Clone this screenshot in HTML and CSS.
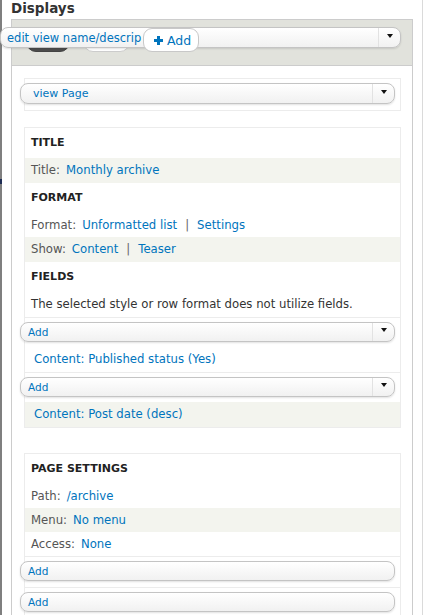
FILE: index.html
```html
<!DOCTYPE html>
<html lang="en">
<head>
    <meta charset="UTF-8">
    <meta name="viewport" content="width=device-width, initial-scale=1.0">
    <title>Displays</title>
    <link rel="stylesheet" href="styles.css">
</head>
<body>

<div class="page">
    <span class="edge-mark"></span>
    <h2 class="page-title">Displays</h2>

    <div class="displays">
        <div class="displays-top">
            <div class="tabs">
                <span class="tab tab-active"></span>
                <span class="tab"></span>
            </div>
        </div>

        <div class="displays-body">
            <div class="box box-top">
                <div class="dropbutton dropbutton-wide">
                    <span class="dropbutton-label">view Page</span>
                    <span class="dropbutton-arrow"></span>
                </div>
            </div>

            <div class="box">
                <h3 class="box-heading">Title</h3>
                <div class="row row-shaded"><span class="label">Title:</span><a href="#">Monthly archive</a></div>

                <h3 class="box-heading">Format</h3>
                <div class="row row-tight"><span class="label">Format:</span><a href="#">Unformatted list</a><span class="sep">|</span><a href="#">Settings</a></div>
                <div class="row row-shaded"><span class="label">Show:</span><a href="#">Content</a><span class="sep">|</span><a href="#">Teaser</a></div>

                <h3 class="box-heading">Fields</h3>
                <div class="row">The selected style or row format does not utilize fields.</div>

                <div class="action-row">
                    <div class="dropbutton">
                        <span class="dropbutton-label">Add</span>
                        <span class="dropbutton-arrow"></span>
                    </div>
                </div>
                <div class="row row-item"><a href="#">Content: Published status (Yes)</a></div>

                <div class="action-row">
                    <div class="dropbutton">
                        <span class="dropbutton-label">Add</span>
                        <span class="dropbutton-arrow"></span>
                    </div>
                </div>
                <div class="row row-item row-shaded"><a href="#">Content: Post date (desc)</a></div>
            </div>

            <div class="box box-settings">
                <h3 class="box-heading">Page settings</h3>
                <div class="row"><span class="label">Path:</span><a href="#">/archive</a></div>
                <div class="row row-shaded"><span class="label">Menu:</span><a href="#">No menu</a></div>
                <div class="row"><span class="label">Access:</span><a href="#">None</a></div>

                <div class="action-row">
                    <div class="dropbutton">
                        <span class="dropbutton-label">Add</span>
                    </div>
                </div>
                <div class="action-row">
                    <div class="dropbutton">
                        <span class="dropbutton-label">Add</span>
                    </div>
                </div>
            </div>
        </div>
    </div>

    <!-- floating display actions, drawn over the tabs -->
    <div class="top-actions">
        <div class="dropbutton dropbutton-top">
            <span class="edit-pill">edit view name/descrip</span>
            <span class="add-pill">
                <svg class="plus" width="9" height="9" viewBox="0 0 9 9"><rect x="3" y="0" width="3" height="9" fill="#0074bd"/><rect x="0" y="3" width="9" height="3" fill="#0074bd"/></svg>
                Add
            </span>
            <span class="spacer"></span>
            <span class="dropbutton-arrow"></span>
        </div>
    </div>
</div>

</body>
</html>
```

FILE: styles.css
```css
* {
    box-sizing: border-box;
}

body {
    margin: 0;
    font-family: "DejaVu Sans", sans-serif;
    font-size: 11.7px;
    color: #333;
    background: #fff;
}

a {
    color: #0074bd;
    text-decoration: none;
}

.page {
    position: relative;
    width: 423px;
    min-height: 615px;
    border-left: 2px solid #7f7f7f;
    border-right: 1px solid #dadada;
    padding-left: 9px;
}

.edge-mark {
    position: absolute;
    left: -2px;
    top: 179px;
    width: 2px;
    height: 5px;
    background: #1f2d55;
}

.page-title {
    margin: 0 0 3px;
    font-size: 13.5px;
    line-height: 16px;
    font-weight: bold;
    color: #333;
}

.displays {
    width: 402px;
    border: 1px solid #ccc;
    border-bottom: none;
}

.displays-top {
    background: #e1e2dc;
    border-bottom: 1px solid #ccc;
    padding: 11px 0 13px 14px;
}

.tabs {
    display: flex;
    gap: 13px;
}

.tab {
    width: 47px;
    height: 21px;
    border: 1px solid #ccc;
    border-radius: 10px;
    background: #fff;
}

.tab-active {
    width: 44px;
    background: #4d4d4d;
    border-color: #444;
}

.displays-body {
    padding: 12px 11px 0 12px;
}

.box {
    border: 1px solid #ececec;
}

.box + .box {
    margin-top: 16px;
}

.box-settings {
    border-bottom: none;
}

.box + .box-settings {
    margin-top: 25px;
}

.box-top {
    padding: 4px 0 6px;
}

.box-heading {
    margin: 0;
    padding-left: 6px;
    font-size: 11px;
    line-height: 30px;
    font-weight: bold;
    text-transform: uppercase;
    color: #222;
}

.row {
    padding-left: 6px;
    line-height: 25px;
    white-space: nowrap;
}

.row-tight,
.box-settings .row {
    line-height: 24px;
}

.row-shaded {
    background: #f3f4ee;
}

.row-item {
    padding-left: 9px;
}

.label {
    color: #555;
    margin-right: 6px;
}

.sep {
    color: #666;
    margin: 0 8px;
}

.action-row {
    border-top: 1px solid #ececec;
    padding: 4px 0 5px;
}

.box-settings .action-row {
    padding: 4px 0 6px;
}

/* dropbutton */
.dropbutton {
    display: flex;
    align-items: center;
    height: 20px;
    margin: 0 5px 0 -5px;
    border: 1px solid #c4c4c4;
    border-radius: 8px;
    background: linear-gradient(#fff, #f1f1f1);
    box-shadow: 0 1px 2px rgba(0, 0, 0, 0.12);
}

.dropbutton-label {
    flex: 1;
    padding-left: 7px;
    font-size: 10.5px;
    color: #0074bd;
}

.dropbutton-wide {
    height: 21px;
}

.dropbutton-wide .dropbutton-label {
    padding-left: 12px;
    font-size: 11px;
}

.dropbutton-arrow {
    width: 22px;
    align-self: stretch;
    border-left: 1px solid #e2e2e2;
    display: flex;
    justify-content: center;
    align-items: center;
}

.dropbutton-arrow::after {
    content: "";
    margin-top: -4px;
    border-left: 3px solid transparent;
    border-right: 3px solid transparent;
    border-top: 4px solid #111;
}

.top-actions {
    position: absolute;
    top: 27px;
    left: -2px;
    width: 401px;
}

.dropbutton-top {
    margin: 0;
    height: 21px;
}

.edit-pill {
    width: 142px;
    padding-left: 6px;
    font-size: 11.5px;
    color: #0074bd;
    white-space: nowrap;
}

.add-pill {
    position: relative;
    align-self: flex-start;
    display: flex;
    align-items: center;
    gap: 4px;
    width: 56px;
    height: 24px;
    padding-left: 10px;
    border: 1px solid #c8c8c8;
    border-radius: 9px;
    background: #fff;
    font-size: 12.5px;
    color: #0074bd;
}

.spacer {
    flex: 1;
}
```
